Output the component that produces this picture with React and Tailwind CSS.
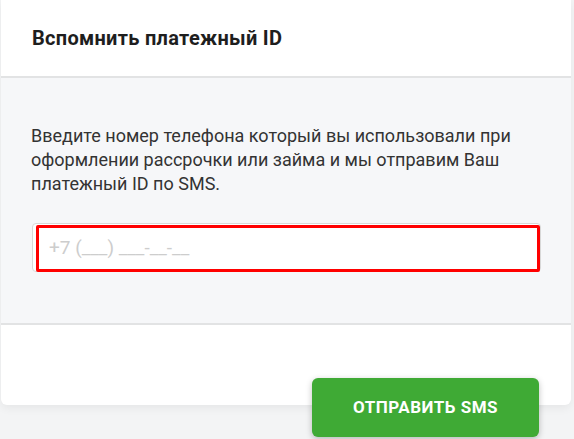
export default function App() {
  return (
    <div className="w-[574px] h-[439px] bg-[#f3f4f5] overflow-hidden font-['Roboto',sans-serif]">
      <div className="relative ml-px w-[570px]">
        <div className="rounded-b-[6px] bg-white shadow-[0_3px_10px_rgba(0,0,0,0.06)] overflow-hidden">
          <div className="h-[78px] flex items-center px-[31px] border-b-2 border-[#e2e3e4]">
            <h1 className="text-[20px] font-bold text-[#1e1e1e] tracking-[0.3px]">Вспомнить платежный ID</h1>
          </div>
          <div className="bg-[#f6f7f9] h-[247px] border-b-2 border-[#e2e3e4] pt-[46px] px-[30px]">
            <p className="text-[18px] leading-[24px] text-[#333]">
              Введите номер телефона который вы использовали при оформлении рассрочки или займа и мы отправим Ваш платежный ID по SMS.
            </p>
            <div className="mt-[27px] ml-[1px] w-[509px] h-[49px] rounded-[4px] border border-[#d8d8d8] bg-white">
              <div className="ml-[3px] mt-px h-[47px] border-[3px] border-[#ff0000] rounded-[2px] flex items-center pl-[10px]">
                <span className="text-[19px] text-[#cdcdcd]">+7 (___) ___-__-__</span>
              </div>
            </div>
          </div>
          <div className="h-[80px]"></div>
        </div>
        <button className="absolute left-[311px] top-[378px] w-[227px] h-[59px] rounded-[6px] bg-[#3faa35] shadow-[0_2px_6px_rgba(0,0,0,0.25)] text-white text-[17px] font-bold uppercase tracking-[0.5px]">
          Отправить SMS
        </button>
      </div>
    </div>
  );
}
